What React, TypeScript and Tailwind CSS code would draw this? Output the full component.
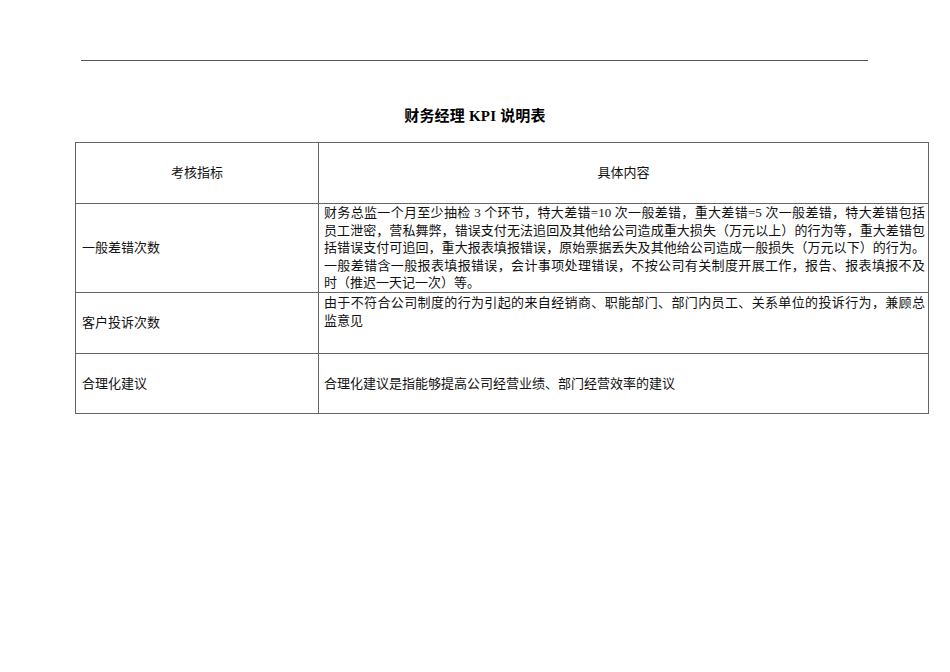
import React from "react";

const font = {
  fontFamily: '"Liberation Serif", "Noto Sans CJK SC", serif',
};

const JustLine: React.FC<{ text: string; last?: boolean }> = ({ text, last }) => (
  <div
    className={
      last
        ? "whitespace-nowrap"
        : "whitespace-nowrap text-justify [text-align-last:justify]"
    }
  >
    {text}
  </div>
);

const rowOne = [
  "财务总监一个月至少抽检 3 个环节，特大差错=10 次一般差错，重大差错=5 次一般差错，特大差错包括",
  "员工泄密，营私舞弊，错误支付无法追回及其他给公司造成重大损失（万元以上）的行为等，重大差错包",
  "括错误支付可追回，重大报表填报错误，原始票据丢失及其他给公司造成一般损失（万元以下）的行为。",
  "一般差错含一般报表填报错误，会计事项处理错误，不按公司有关制度开展工作，报告、报表填报不及",
  "时（推迟一天记一次）等。",
];

const rowTwo = [
  "由于不符合公司制度的行为引起的来自经销商、职能部门、部门内员工、关系单位的投诉行为，兼顾总",
  "监意见",
];

export default function App() {
  return (
    <div className="h-[672px] w-[950px] bg-white text-black" style={font}>
      <div className="pt-[60px] pl-[81px] pr-[82px]">
        <div className="h-px bg-[#555]" />
      </div>

      <h1 className="mt-[45px] text-center text-[15px] font-bold leading-[20px] tracking-[0.2px]">
        财务经理 KPI 说明表
      </h1>

      <div className="mt-[16px] pl-[75px] pr-[21px]">
        <table className="w-full table-fixed border-collapse text-[13px] leading-[18px] text-[#111]">
          <colgroup>
            <col className="w-[243px]" />
            <col />
          </colgroup>
          <tbody>
            <tr className="h-[61px]">
              <td className="border border-[#666] text-center align-middle">
                考核指标
              </td>
              <td className="border border-[#666] text-center align-middle">
                具体内容
              </td>
            </tr>
            <tr className="h-[89px]">
              <td className="border border-[#666] pl-[6px] align-middle">
                一般差错次数
              </td>
              <td className="border border-[#666] pl-[5px] pr-[3px] pb-0 pt-0 align-top leading-[17.6px]">
                {rowOne.map((t, i) => (
                  <JustLine key={i} text={t} last={i === rowOne.length - 1} />
                ))}
              </td>
            </tr>
            <tr className="h-[61px]">
              <td className="border border-[#666] pl-[6px] align-middle">
                客户投诉次数
              </td>
              <td className="border border-[#666] pl-[5px] pr-[3px] pt-px align-top">
                {rowTwo.map((t, i) => (
                  <JustLine key={i} text={t} last={i === rowTwo.length - 1} />
                ))}
              </td>
            </tr>
            <tr className="h-[60px]">
              <td className="border border-[#666] pl-[6px] align-middle">
                合理化建议
              </td>
              <td className="border border-[#666] pl-[5px] pr-[3px] align-middle">
                合理化建议是指能够提高公司经营业绩、部门经营效率的建议
              </td>
            </tr>
          </tbody>
        </table>
      </div>
    </div>
  );
}
